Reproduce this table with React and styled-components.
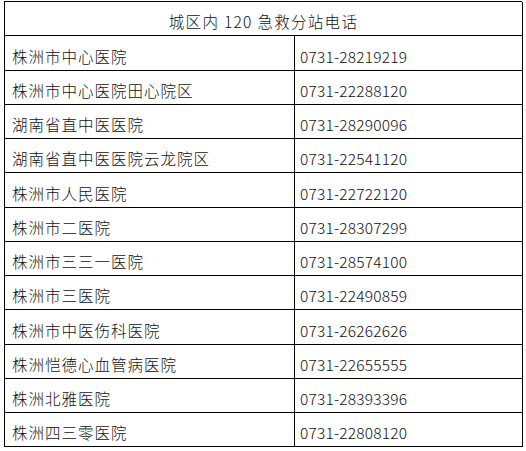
import React from 'react';
import styled, { createGlobalStyle } from 'styled-components';

const GlobalStyle = createGlobalStyle`
  html, body {
    margin: 0;
    padding: 0;
    background: #ffffff;
  }
  body {
    font-family: "Noto Sans CJK SC", "Noto Sans", sans-serif;
    color: #111111;
  }
`;

const Page = styled.div`
  padding: 1px 0 0 4px;
  width: 526px;
  box-sizing: border-box;
`;

const Table = styled.div`
  display: grid;
  grid-template-columns: 290px 228px;
  grid-auto-rows: 34.25px;
  width: 518px;
  border-top: 1px solid #000;
  border-left: 1px solid #000;
  box-sizing: border-box;
`;

const Cell = styled.div`
  box-sizing: border-box;
  border-right: 1px solid #000;
  border-bottom: 1px solid #000;
  display: flex;
  align-items: center;
  justify-content: ${p => (p.$center ? 'center' : 'flex-start')};
  padding: 7px 0 0 ${p => (p.$center ? 0 : p.$pad)}px;
  grid-column: ${p => (p.$span ? '1 / span 2' : 'auto')};
  font-size: 15.5px;
  font-weight: 300;
  letter-spacing: ${p => p.$spacing}px;
  line-height: 1;
  white-space: nowrap;
`;

const rows = [
  ['株洲市中心医院', '0731-28219219'],
  ['株洲市中心医院田心院区', '0731-22288120'],
  ['湖南省直中医医院', '0731-28290096'],
  ['湖南省直中医医院云龙院区', '0731-22541120'],
  ['株洲市人民医院', '0731-22722120'],
  ['株洲市二医院', '0731-28307299'],
  ['株洲市三三一医院', '0731-28574100'],
  ['株洲市三医院', '0731-22490859'],
  ['株洲市中医伤科医院', '0731-26262626'],
  ['株洲恺德心血管病医院', '0731-22655555'],
  ['株洲北雅医院', '0731-28393396'],
  ['株洲四三零医院', '0731-22808120'],
];

export default function App() {
  return (
    <Page>
      <GlobalStyle />
      <Table>
        <Cell $span $center $spacing={1.3}>城区内 120 急救分站电话</Cell>
        {rows.map(([name, phone]) => (
          <React.Fragment key={name}>
            <Cell $pad={7} $spacing={1}>{name}</Cell>
            <Cell $pad={5} $spacing={0.2}>{phone}</Cell>
          </React.Fragment>
        ))}
      </Table>
    </Page>
  );
}
